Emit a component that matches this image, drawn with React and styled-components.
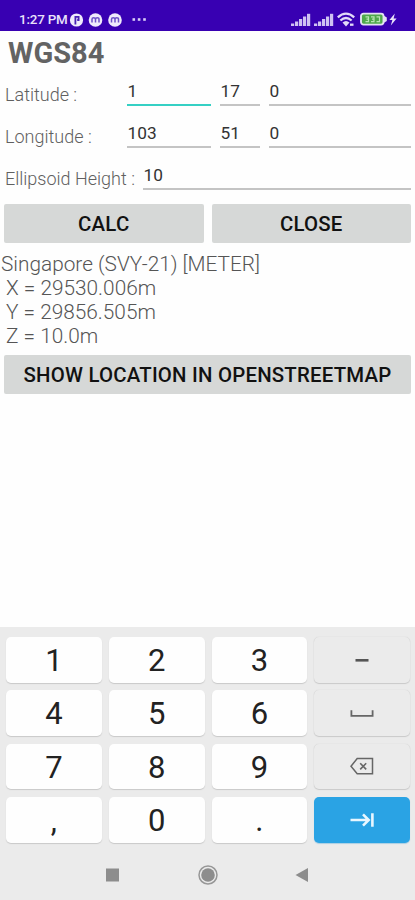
import React from 'react';
import styled, { createGlobalStyle } from 'styled-components';

const GlobalStyle = createGlobalStyle`
  * {
    box-sizing: border-box;
  }
  body {
    margin: 0;
    background: #fefefe;
    font-family: Roboto, 'Liberation Sans', sans-serif;
  }
`;

const Screen = styled.div`
  display: flex;
  flex-direction: column;
  width: 415px;
  height: 900px;
  overflow: hidden;
`;

const StatusBar = styled.header`
  display: flex;
  justify-content: space-between;
  height: 30.5px;
  padding: 9px 17px 0 19px;
  background: #3800b2;
  color: #e9e2fa;
`;

const StatusGroup = styled.div`
  display: flex;
  align-items: center;
  gap: ${(p) => p.$gap || 0}px;
  height: 21px;
`;

const Clock = styled.span`
  width: 50px;
  font-size: 13.4px;
  font-weight: 500;
  line-height: 21px;
  letter-spacing: -0.2px;
  white-space: nowrap;
`;

const Title = styled.h1`
  height: 43.5px;
  margin: 0;
  padding: 5px 0 0 8px;
  color: #636363;
  font-size: 29px;
  font-weight: 700;
  line-height: 34px;
`;

const Row = styled.div`
  display: flex;
  height: 42.2px;
  padding: 0 4px 0 5px;
`;

const Label = styled.label`
  width: ${(p) => p.$width}px;
  padding-top: 10px;
  color: #606060;
  font-size: 18px;
  font-weight: 300;
  line-height: 21px;
  white-space: nowrap;
`;

const Field = styled.div`
  flex: ${(p) => (p.$width ? `0 0 ${p.$width}px` : '1')};
  height: 32px;
  margin-right: ${(p) => p.$gap || 0}px;
  padding: 7px 0 0 0.5px;
  border-bottom: 2px solid ${(p) => (p.$focused ? '#35d0c4' : '#c4c4c4')};
  color: #333;
  font-size: 17.3px;
  line-height: 21px;
`;

const ButtonRow = styled.div`
  display: flex;
  gap: 8px;
  height: 39px;
  margin-top: ${(p) => p.$top}px;
  padding: 0 4px;
`;

const Button = styled.button`
  flex: 1;
  padding: 1px 0 0;
  border: 0;
  border-radius: 2px;
  background: #d6d8d7;
  color: #111;
  font-family: inherit;
  font-size: 20.4px;
  font-weight: 500;
  line-height: 24px;
  letter-spacing: 0.2px;
  white-space: nowrap;
`;

const Result = styled.div`
  height: 104px;
  padding: 9px 0 0 1px;
  color: #555;
  font-size: 20.8px;
  font-weight: 300;
  line-height: 24.2px;
  white-space: pre;
`;

const Keyboard = styled.section`
  display: flex;
  flex-direction: column;
  height: 273px;
  margin-top: auto;
  padding: 10px 5px 0 6px;
  background: #ebebeb;
`;

const Keys = styled.div`
  display: grid;
  grid-template-columns: repeat(4, 1fr);
  grid-auto-rows: 45.5px;
  gap: 7.9px 7px;
`;

const keyColors = {
  digit: '#fefefe',
  action: '#ebebeb',
  next: '#2aa3e4',
};

const Key = styled.div`
  display: flex;
  align-items: center;
  justify-content: center;
  padding-top: ${(p) => (p.$kind === 'digit' ? 2 : 0)}px;
  border-radius: 5px;
  background: ${(p) => keyColors[p.$kind]};
  box-shadow: 0 1px 1px ${(p) => (p.$kind === 'next' ? '#a9cfe4' : '#c9c9c9')}${(p) =>
    p.$kind === 'action' ? ', 0 0 1px #c4c4c4' : ''};
  color: #222;
  font-size: 31px;
  line-height: 36px;
`;

const NavBar = styled.nav`
  display: flex;
  justify-content: center;
  padding-top: 20.5px;
`;

function Signal() {
  return (
    <svg width="20" height="14" viewBox="0 0 20 14" fill="#cfc2f2">
      <rect x="0" y="10.5" width="3.2" height="2.5" />
      <rect x="4" y="8.5" width="3.2" height="4.5" />
      <rect x="8" y="6" width="3.2" height="7" />
      <rect x="12" y="3.5" width="3.2" height="9.5" />
      <rect x="16" y="0.8" width="3.2" height="12.2" />
    </svg>
  );
}

function NotificationIcons() {
  return (
    <svg width="80" height="16" viewBox="0 0 80 16">
      <circle cx="7.5" cy="8" r="6.6" fill="#efeafc" />
      <path d="M6.4 12.6V4.8h3.2v3.2H8.2" fill="none" stroke="#4820b4" strokeWidth="1.8" />
      {[26.5, 46].map((x) => (
        <g key={x}>
          <circle cx={x} cy="8" r="6.8" fill="#efeafc" />
          <path
            d={`M${x - 3.5} 10.5V7.2q0-1.5 1.7-1.5t1.8 1.5v3.3m0-3.3q0-1.5 1.8-1.5t1.7 1.5v3.3`}
            fill="none"
            stroke="#6d50c8"
            strokeWidth="1.5"
          />
        </g>
      ))}
      <g fill="#d9cdf7">
        <rect x="63.5" y="6.2" width="2.6" height="2.6" />
        <rect x="68.8" y="6.2" width="2.6" height="2.6" />
        <rect x="74.2" y="6.2" width="2.6" height="2.6" />
      </g>
    </svg>
  );
}

function Wifi() {
  return (
    <svg width="20" height="16" viewBox="0 0 20 16" fill="none" stroke="#e2daf8" strokeWidth="2.3">
      <path d="M0.8 5.4Q9-2.2 17.2 5.4" />
      <path d="M3.4 8.5q5.6-5 11.2 0" />
      <path d="M5.5 10.6q3.5-3.2 7 0L9 14.4z" fill="#e2daf8" stroke="none" />
      <path d="M13 12.7h3.5" />
    </svg>
  );
}

function Battery() {
  return (
    <svg width="38" height="15" viewBox="0 0 38 15">
      <rect x="1" y="1.6" width="22.5" height="11" rx="2.5" fill="#4fa84c" stroke="#e4e2f3" strokeWidth="1.9" />
      <path d="M24 3.7l2.8 1.7v3.6L24 10.7z" fill="#e4e2f3" />
      <path
        d="M5.5 4.8h3v4.8h-3M8.5 7.2h-2M11 4.8h3v4.8h-3M14 7.2h-2M16.5 4.8h3v4.8h-3"
        fill="none"
        stroke="#b9e6b3"
        strokeWidth="1.2"
      />
      <path d="M34.8 1.4l-5.4 6.7h3l-1.6 5.5 5.8-7h-3z" fill="#e9e2fa" />
    </svg>
  );
}

function Minus() {
  return (
    <svg width="24" height="24" viewBox="0 0 24 24">
      <rect x="5.5" y="11" width="13" height="2.6" fill="#555" />
    </svg>
  );
}

function Space() {
  return (
    <svg width="26" height="24" viewBox="0 0 26 24" fill="none" stroke="#666" strokeWidth="1.8">
      <path d="M2.4 9.3v5.6h21.2V9.3" />
    </svg>
  );
}

function Backspace() {
  return (
    <svg width="26" height="24" viewBox="0 0 26 24" fill="none" stroke="#666" strokeWidth="1.5">
      <path d="M8.2 3.6h15.3v15.2H8.2L2 11.2z" />
      <path d="M11.2 8.2l6 6.2M17.2 8.2l-6 6.2" strokeWidth="1.6" />
    </svg>
  );
}

function Next() {
  return (
    <svg width="26" height="24" viewBox="0 0 26 24" fill="none" stroke="#e9f7ff" strokeWidth="2.6">
      <path d="M1.5 12h17.5M14 6.3l5.7 5.7-5.7 5.7M23.4 5.3v13.4" />
    </svg>
  );
}

const keys = ['1', '2', '3', <Minus />, '4', '5', '6', <Space />, '7', '8', '9', <Backspace />, ',', '0', '.', <Next />];

function keyKind(key, index) {
  if (typeof key === 'string') return 'digit';
  return index === keys.length - 1 ? 'next' : 'action';
}

function App() {
  return (
    <>
      <GlobalStyle />
      <Screen>
        <StatusBar>
          <StatusGroup>
            <Clock>1:27 PM</Clock>
            <NotificationIcons />
          </StatusGroup>
          <StatusGroup $gap={3}>
            <Signal />
            <Signal />
            <Wifi />
            <Battery />
          </StatusGroup>
        </StatusBar>
        <Title>WGS84</Title>
        <Row>
          <Label $width={122}>Latitude :</Label>
          <Field $width={84} $gap={9} $focused>1</Field>
          <Field $width={40} $gap={9}>17</Field>
          <Field>0</Field>
        </Row>
        <Row>
          <Label $width={122}>Longitude :</Label>
          <Field $width={84} $gap={9}>103</Field>
          <Field $width={40} $gap={9}>51</Field>
          <Field>0</Field>
        </Row>
        <Row>
          <Label $width={138}>Ellipsoid Height :</Label>
          <Field>10</Field>
        </Row>
        <ButtonRow $top={3.3}>
          <Button>CALC</Button>
          <Button>CLOSE</Button>
        </ButtonRow>
        <Result>{'Singapore (SVY-21) [METER]\n X = 29530.006m\n Y = 29856.505m\n Z = 10.0m'}</Result>
        <ButtonRow $top={8.5}>
          <Button>SHOW LOCATION IN OPENSTREETMAP</Button>
        </ButtonRow>
        <Keyboard>
          <Keys>
            {keys.map((key, index) => (
              <Key key={index} $kind={keyKind(key, index)}>
                {key}
              </Key>
            ))}
          </Keys>
          <NavBar>
            <svg width="216" height="24" viewBox="0 0 216 24" fill="#8d8d8d">
              <rect x="6" y="5.5" width="13" height="13" />
              <circle cx="108" cy="12" r="6.8" />
              <circle cx="108" cy="12" r="9" fill="none" stroke="#979797" strokeWidth="1.5" />
              <path d="M195.5 12l12.5-7v14z" />
            </svg>
          </NavBar>
        </Keyboard>
      </Screen>
    </>
  );
}

export default App;
